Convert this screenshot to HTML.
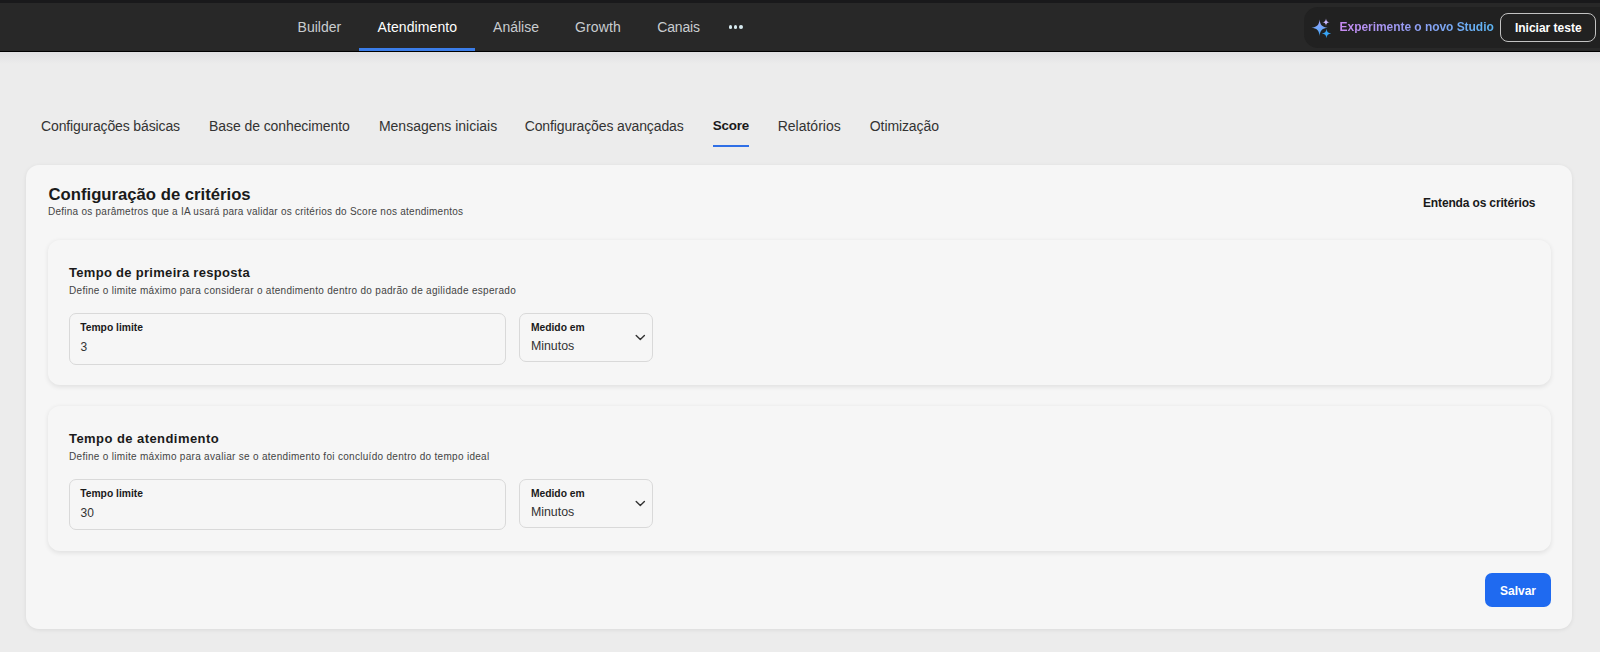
<!DOCTYPE html><html><head><meta charset="utf-8"><style>
*{margin:0;padding:0;box-sizing:border-box}
html,body{width:1600px;height:652px;overflow:hidden}
body{background:#ececec;font-family:"Liberation Sans",sans-serif;position:relative}
.t{position:absolute;white-space:nowrap;line-height:1}
.hdr{position:absolute;left:0;top:0;width:1600px;height:52px;background:#282828;border-top:3px solid #19191b;border-bottom:1px solid #000}
.hshadow{position:absolute;left:0;top:52px;width:1600px;height:12px;background:linear-gradient(#e0e0e2,#ececec)}
.nav{color:#c9cdd0}
.navact{color:#fff}
.navline{position:absolute;left:359px;top:48px;width:116px;height:3px;background:#3b7de9}
.dot{position:absolute;width:3.8px;height:3.8px;border-radius:50%;background:#d6e9ef;top:25.3px}
.pill{position:absolute;left:1304px;top:6.5px;width:310px;height:41.5px;border-radius:14px;background:#212121}
.btn1{position:absolute;left:1500px;top:12.7px;width:96px;height:29.4px;border:1.4px solid #c2c2c2;border-radius:8px;background:#212121}
.grad{background:linear-gradient(90deg,#c88af0 0%,#8fa0f5 50%,#5cb6f5 100%);-webkit-background-clip:text;background-clip:text;color:transparent;font-weight:700}
.tab{color:#333}
.tabline{position:absolute;left:712.5px;top:145px;width:36.5px;height:2px;background:#2f6fe6}
.card{position:absolute;left:26px;top:165px;width:1546px;height:464px;background:#f6f6f6;border-radius:13px;box-shadow:0 1px 4px rgba(0,0,0,0.08)}
.inner{position:absolute;left:47.5px;width:1503.5px;height:145px;background:#f6f6f6;border-radius:12px;box-shadow:0 1.5px 5px rgba(0,0,0,0.09)}
.inp{position:absolute;border:1px solid #d9d9d9;border-radius:7px;background:#f6f6f6}
.b{font-weight:700}
.dark{color:#1a1a1a}
.sub{color:#444}
.salvar{position:absolute;left:1485px;top:572.5px;width:66px;height:34.7px;background:#1f6af0;border-radius:7px}
</style></head><body>
<div class="hdr"></div><div class="hshadow"></div><div class="t nav" style="left:297.6px;top:20.45px;font-size:14px;">Builder</div>
<div class="t navact" style="left:377.5px;top:20.45px;font-size:14px;letter-spacing:0.1px">Atendimento</div>
<div class="t nav" style="left:493.1px;top:20.45px;font-size:14px;">Análise</div>
<div class="t nav" style="left:575px;top:20.45px;font-size:14px;letter-spacing:0.15px">Growth</div>
<div class="t nav" style="left:657.3px;top:20.45px;font-size:14px;letter-spacing:-0.2px">Canais</div>
<div class="navline"></div><div class="dot" style="left:728.5px"></div><div class="dot" style="left:733.7px"></div><div class="dot" style="left:739.1px"></div><div class="pill"></div><svg style="position:absolute;left:1308px;top:16px" width="24" height="24" viewBox="0 0 24 24"><defs><linearGradient id="g1" x1="0" y1="0" x2="0" y2="1"><stop offset="0" stop-color="#a9a6ff"/><stop offset="1" stop-color="#3ea6f6"/></linearGradient></defs><path d="M11.60 3.50 C12.09 8.99 14.31 11.21 19.80 11.70 C14.31 12.19 12.09 14.41 11.60 19.90 C11.11 14.41 8.89 12.19 3.40 11.70 C8.89 11.21 11.11 8.99 11.60 3.50Z" fill="url(#g1)"/><path d="M18.00 2.60 C18.22 5.08 19.22 6.08 21.70 6.30 C19.22 6.52 18.22 7.52 18.00 10.00 C17.78 7.52 16.78 6.52 14.30 6.30 C16.78 6.08 17.78 5.08 18.00 2.60Z" fill="#c9b8ff"/><path d="M18.50 12.80 C18.78 15.95 20.05 17.22 23.20 17.50 C20.05 17.78 18.78 19.05 18.50 22.20 C18.22 19.05 16.95 17.78 13.80 17.50 C16.95 17.22 18.22 15.95 18.50 12.80Z" fill="#37a5f6"/></svg><div class="t grad" style="left:1339.6px;top:21.24px;font-size:12px;letter-spacing:-0.05px">Experimente o novo Studio</div>
<div class="btn1"></div><div class="t b" style="left:1514.9px;top:21.74px;font-size:12px;color:#fff">Iniciar teste</div>
<div class="t tab" style="left:41px;top:118.65px;font-size:14px;letter-spacing:-0.13px">Configurações básicas</div>
<div class="t tab" style="left:209.1px;top:118.65px;font-size:14px;letter-spacing:-0.09px">Base de conhecimento</div>
<div class="t tab" style="left:378.9px;top:118.65px;font-size:14px;">Mensagens iniciais</div>
<div class="t tab" style="left:524.7px;top:118.65px;font-size:14px;letter-spacing:-0.13px">Configurações avançadas</div>
<div class="t b dark" style="left:712.7px;top:119.16px;font-size:13.4px;letter-spacing:-0.2px">Score</div>
<div class="t tab" style="left:777.7px;top:118.65px;font-size:14px;">Relatórios</div>
<div class="t tab" style="left:869.8px;top:118.65px;font-size:14px;letter-spacing:-0.1px">Otimização</div>
<div class="tabline"></div><div class="card"></div><div class="t b dark" style="left:48.5px;top:186.56px;font-size:16.7px;">Configuração de critérios</div>
<div class="t sub" style="left:48px;top:206.53px;font-size:10px;letter-spacing:0.25px">Defina os parâmetros que a IA usará para validar os critérios do Score nos atendimentos</div>
<div class="t b dark" style="left:1423px;top:196.94px;font-size:12px;letter-spacing:-0.15px">Entenda os critérios</div>
<div class="inner" style="top:240px"></div><div class="t b dark" style="left:69px;top:265.90px;font-size:13px;letter-spacing:0.3px">Tempo de primeira resposta</div>
<div class="t sub" style="left:69px;top:285.54px;font-size:10px;letter-spacing:0.3px">Define o limite máximo para considerar o atendimento dentro do padrão de agilidade esperado</div>
<div class="inp" style="left:69px;top:313px;width:436.5px;height:52px"></div><div class="t b dark" style="left:80.2px;top:323.48px;font-size:10.3px;">Tempo limite</div>
<div class="t " style="left:80.5px;top:340.74px;font-size:12px;color:#333">3</div>
<div class="inp" style="left:519.4px;top:313px;width:133.2px;height:48.8px"></div><div class="t b dark" style="left:530.9px;top:323.38px;font-size:10.3px;">Medido em</div>
<div class="t " style="left:530.9px;top:339.50px;font-size:12.4px;color:#333">Minutos</div>
<svg style="position:absolute;left:634px;top:333px" width="13" height="9" viewBox="0 0 13 9"><path d="M2.2 2.6 L6.3 6.6 L10.4 2.6" fill="none" stroke="#333" stroke-width="1.4" stroke-linecap="round" stroke-linejoin="round"/></svg><div class="inner" style="top:406px"></div><div class="t b dark" style="left:69px;top:431.90px;font-size:13px;letter-spacing:0.44px">Tempo de atendimento</div>
<div class="t sub" style="left:69px;top:451.54px;font-size:10px;letter-spacing:0.3px">Define o limite máximo para avaliar se o atendimento foi concluído dentro do tempo ideal</div>
<div class="inp" style="left:69px;top:479px;width:436.5px;height:50.6px"></div><div class="t b dark" style="left:80.2px;top:489.48px;font-size:10.3px;">Tempo limite</div>
<div class="t " style="left:80.5px;top:506.74px;font-size:12px;color:#333">30</div>
<div class="inp" style="left:519.4px;top:479px;width:133.2px;height:48.8px"></div><div class="t b dark" style="left:530.9px;top:489.38px;font-size:10.3px;">Medido em</div>
<div class="t " style="left:530.9px;top:505.50px;font-size:12.4px;color:#333">Minutos</div>
<svg style="position:absolute;left:634px;top:499px" width="13" height="9" viewBox="0 0 13 9"><path d="M2.2 2.6 L6.3 6.6 L10.4 2.6" fill="none" stroke="#333" stroke-width="1.4" stroke-linecap="round" stroke-linejoin="round"/></svg><div class="salvar"></div><div class="t b" style="left:1500px;top:584.74px;font-size:12px;color:#fff">Salvar</div>
</body></html>
